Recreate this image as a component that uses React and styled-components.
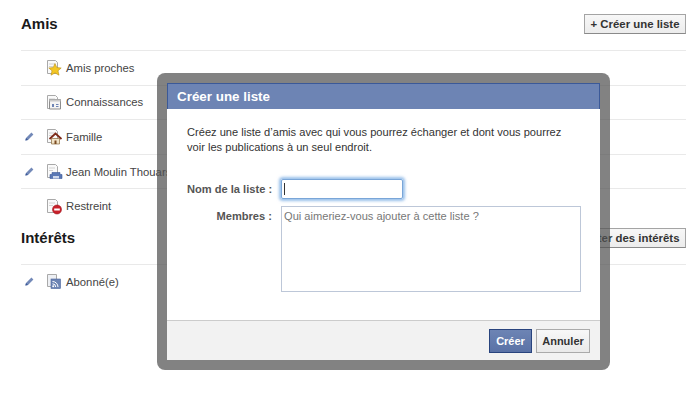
import React from 'react'
import styled, { createGlobalStyle } from 'styled-components'

const GlobalStyle = createGlobalStyle`
  html, body {
    margin: 0;
    padding: 0;
    background: #fff;
    font-family: "Liberation Sans", Arial, sans-serif;
    font-size: 11.3px;
    color: #333;
  }
`

const Page = styled.div`
  position: relative;
  width: 700px;
  height: 404px;
  overflow: hidden;
  box-sizing: border-box;
  padding: 14px 14px 0 21px;
`

const Section = styled.section`
  & + & {
    margin-top: 5px;
  }
`

const SectionHeader = styled.div`
  display: flex;
  align-items: flex-start;
  justify-content: space-between;
  height: 36px;
`

const Title = styled.h2`
  margin: 0;
  font-size: 15px;
  line-height: 20px;
  font-weight: bold;
  color: #1a1a1a;
`

const GreyButton = styled.button`
  height: 20px;
  padding: 0 5.5px;
  box-sizing: border-box;
  font-family: inherit;
  font-size: 11.4px;
  font-weight: bold;
  color: #333;
  white-space: nowrap;
  background: linear-gradient(#f7f7f7, #ececec);
  border: 1px solid #a4a4a4;
  border-bottom-color: #8a8a8a;
`

const Row = styled.div`
  display: flex;
  align-items: center;
  height: 34.6px;
  box-sizing: border-box;
  border-top: 1px solid #e9e9e9;
  color: #444;
`

const EditSlot = styled.span`
  display: flex;
  width: 26px;
  padding-left: 4px;
  box-sizing: border-box;
`

const IconSlot = styled.span`
  display: flex;
  width: 19px;
`

const Overlay = styled.div`
  position: absolute;
  left: 157px;
  top: 73px;
  width: 453px;
  height: 297px;
  box-sizing: border-box;
  border: 10px solid rgba(82, 82, 82, 0.72);
  border-radius: 8px;
  background: #fff;
  background-clip: padding-box;
  display: flex;
  flex-direction: column;
  font-size: 11.1px;
`

const DialogTitle = styled.div`
  height: 26px;
  box-sizing: border-box;
  padding: 0 0 1px 9px;
  display: flex;
  align-items: center;
  background: #6d84b4;
  border: 1px solid #3b5998;
  border-bottom: 0;
  color: #fff;
  font-size: 13.4px;
  font-weight: bold;
`

const DialogBody = styled.div`
  flex: 1;
  padding: 16px 0 0 20px;
`

const Intro = styled.p`
  margin: 0 0 24px;
  line-height: 15px;
  color: #333;
`

const Field = styled.div`
  display: flex;
  align-items: ${p => (p.$top ? 'flex-start' : 'center')};
  gap: 9px;
  margin-bottom: 7px;
`

const Label = styled.label`
  width: 85px;
  box-sizing: border-box;
  padding-top: ${p => (p.$top ? '4px' : '0')};
  text-align: right;
  font-weight: bold;
  color: #555;
  white-space: nowrap;
`

const NameInput = styled.div`
  width: 122px;
  height: 20px;
  box-sizing: border-box;
  padding: 3px 2px;
  border: 1px solid #7aa6d8;
  border-radius: 2px;
  box-shadow: 0 0 3px 2px rgba(110, 165, 225, 0.7);
`

const Caret = styled.span`
  display: block;
  width: 1px;
  height: 12px;
  background: #333;
`

const MembersBox = styled.div`
  width: 300px;
  height: 86px;
  flex-shrink: 0;
  box-sizing: border-box;
  padding: 2px;
  border: 1px solid #bdc7d8;
  color: #777;
  line-height: 15px;
`

const Footer = styled.div`
  height: 40px;
  box-sizing: border-box;
  display: flex;
  align-items: center;
  justify-content: flex-end;
  gap: 4px;
  padding-right: 10px;
  background: #f2f2f2;
  border-top: 1px solid #ccc;
`

const FooterButton = styled.button`
  height: 24px;
  box-sizing: border-box;
  font-family: inherit;
  font-size: 11px;
  font-weight: bold;
  padding: 0;
  width: ${p => (p.$primary ? '43px' : '54px')};
  color: ${p => (p.$primary ? '#fff' : '#333')};
  background: ${p => (p.$primary ? 'linear-gradient(#6d84b4, #5a72a6)' : 'linear-gradient(#f8f8f8, #e9e9e9)')};
  border: 1px solid ${p => (p.$primary ? '#29447e' : '#aaa')};
`

const Pencil = () => (
  <svg width="9" height="9" viewBox="0 0 9 9">
    <path d="M6.4 .6 8.4 2.6 3 8 .4 8.6 1 6Z" fill="#7389b8" />
    <path d="M1 6 .4 8.6 3 8Z" fill="#3b5998" />
  </svg>
)

const Sheet = () => (
  <>
    <path d="M.5 1.5H8.5L10.5 3.5V14.5H.5Z" fill="#fafafa" stroke="#a9a9a9" />
    <path d="M2 5H8M2 7.5H6" stroke="#d2d2d2" />
  </>
)

const overlays = {
  star: <path d="M8 4.5 9.8 8.6 14.2 9 11 11.8 12 16.2 8 13.9 4 16.2 5 11.8 1.8 9 6.2 8.6Z" fill="#f3c623" stroke="#b98f1a" strokeWidth=".6" />,
  card: (
    <>
      <path d="M2.5 5.5H13.5V15H2.5Z" fill="#f4f4f4" stroke="#8d8d8d" />
      <path d="M2.5 5.5H13.5V7.5H2.5Z" fill="#c9c9c9" />
      <path d="M5 10H7V13H5ZM9 10H11.5V11H9ZM9 12H11.5V13H9Z" fill="#6d84b4" />
    </>
  ),
  house: (
    <>
      <path d="M4.5 10.5H12.5V16H4.5Z" fill="#f2e4c9" stroke="#8a6a3c" strokeWidth=".7" />
      <path d="M2.5 11 8.5 5.5 14.5 11" fill="none" stroke="#7d2a18" strokeWidth="1.8" />
      <path d="M7.5 12.5H9.5V16H7.5Z" fill="#7a4a20" />
    </>
  ),
  building: (
    <>
      <path d="M5 9.5H13V11.5H15V15.5H3V11.5H5Z" fill="#5a78b4" stroke="#3b5998" strokeWidth=".6" />
      <path d="M6 13H12V15.5H6Z" fill="#cfd9ec" />
    </>
  ),
  block: (
    <>
      <circle cx="10" cy="11.5" r="4.5" fill="#c8202a" stroke="#9c1820" strokeWidth=".6" />
      <rect x="7.2" y="10.5" width="5.6" height="2" fill="#fff" />
    </>
  ),
  feed: (
    <>
      <path d="M.5 1.5H9.5V13.5H.5Z" fill="#eef0f4" stroke="#a9a9a9" />
      <rect x="4" y="6" width="9.5" height="9.5" fill="#6d84b4" stroke="#4a659d" strokeWidth=".6" />
      <path d="M5.5 8.5A5.5 5.5 0 0 1 11 14M5.5 10.8A3.2 3.2 0 0 1 8.7 14" fill="none" stroke="#fff" strokeWidth="1" />
      <circle cx="6.2" cy="13.3" r="1" fill="#fff" />
    </>
  ),
}

const ListIcon = ({ kind }) => (
  <svg width="16" height="17" viewBox="0 0 16 17">
    {kind === 'feed' ? null : <Sheet />}
    {overlays[kind]}
  </svg>
)

const ListRow = ({ icon, label, editable }) => (
  <Row>
    <EditSlot>{editable && <Pencil />}</EditSlot>
    <IconSlot>
      <ListIcon kind={icon} />
    </IconSlot>
    <span>{label}</span>
  </Row>
)

const App = () => {
  return (
    <Page>
      <GlobalStyle />
      <Section>
        <SectionHeader>
          <Title>Amis</Title>
          <GreyButton>+ Créer une liste</GreyButton>
        </SectionHeader>
        <ListRow icon="star" label="Amis proches" />
        <ListRow icon="card" label="Connaissances" />
        <ListRow icon="house" label="Famille" editable />
        <ListRow icon="building" label="Jean Moulin Thouars" editable />
        <ListRow icon="block" label="Restreint" />
      </Section>
      <Section>
        <SectionHeader>
          <Title>Intérêts</Title>
          <GreyButton>+ Ajouter des intérêts</GreyButton>
        </SectionHeader>
        <ListRow icon="feed" label="Abonné(e)" editable />
      </Section>

      <Overlay>
        <DialogTitle>Créer une liste</DialogTitle>
        <DialogBody>
          <Intro>
            Créez une liste d’amis avec qui vous pourrez échanger et dont vous pourrez
            <br />
            voir les publications à un seul endroit.
          </Intro>
          <Field>
            <Label>Nom de la liste :</Label>
            <NameInput>
              <Caret />
            </NameInput>
          </Field>
          <Field $top>
            <Label $top>Membres :</Label>
            <MembersBox>Qui aimeriez-vous ajouter à cette liste ?</MembersBox>
          </Field>
        </DialogBody>
        <Footer>
          <FooterButton $primary>Créer</FooterButton>
          <FooterButton>Annuler</FooterButton>
        </Footer>
      </Overlay>
    </Page>
  )
}

export default App
